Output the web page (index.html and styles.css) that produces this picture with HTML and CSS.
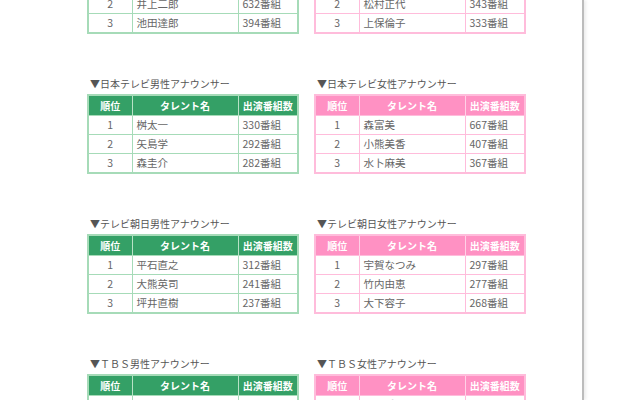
FILE: index.html
```html
<!DOCTYPE html>
<html lang="ja">
<head>
<meta charset="utf-8">
<link rel="stylesheet" href="styles.css">
</head>
<body>
<div class="page">
  <div class="sheet">
    <section class="pair">
      <div class="block male">
        <h3 class="title">▼ＴＢＳ男性アナウンサー</h3>
        <table>
          <colgroup><col class="c1"><col class="c2"><col class="c3"></colgroup>
          <tr><th>順位</th><th>タレント名</th><th>出演番組数</th></tr>
          <tr><td class="rank">1</td><td>安住紳一郎</td><td>700番組</td></tr>
          <tr><td class="rank">2</td><td>井上二郎</td><td>632番組</td></tr>
          <tr><td class="rank">3</td><td>池田達郎</td><td>394番組</td></tr>
        </table>
      </div>
      <div class="block female">
        <h3 class="title">▼ＴＢＳ女性アナウンサー</h3>
        <table>
          <colgroup><col class="c1"><col class="c2"><col class="c3"></colgroup>
          <tr><th>順位</th><th>タレント名</th><th>出演番組数</th></tr>
          <tr><td class="rank">1</td><td>江藤愛</td><td>400番組</td></tr>
          <tr><td class="rank">2</td><td>松村正代</td><td>343番組</td></tr>
          <tr><td class="rank">3</td><td>上保倫子</td><td>333番組</td></tr>
        </table>
      </div>
    </section>

    <section class="pair">
      <div class="block male">
        <h3 class="title">▼日本テレビ男性アナウンサー</h3>
        <table>
          <colgroup><col class="c1"><col class="c2"><col class="c3"></colgroup>
          <tr><th>順位</th><th>タレント名</th><th>出演番組数</th></tr>
          <tr><td class="rank">1</td><td>桝太一</td><td>330番組</td></tr>
          <tr><td class="rank">2</td><td>矢島学</td><td>292番組</td></tr>
          <tr><td class="rank">3</td><td>森圭介</td><td>282番組</td></tr>
        </table>
      </div>
      <div class="block female">
        <h3 class="title">▼日本テレビ女性アナウンサー</h3>
        <table>
          <colgroup><col class="c1"><col class="c2"><col class="c3"></colgroup>
          <tr><th>順位</th><th>タレント名</th><th>出演番組数</th></tr>
          <tr><td class="rank">1</td><td>森富美</td><td>667番組</td></tr>
          <tr><td class="rank">2</td><td>小熊美香</td><td>407番組</td></tr>
          <tr><td class="rank">3</td><td>水卜麻美</td><td>367番組</td></tr>
        </table>
      </div>
    </section>

    <section class="pair">
      <div class="block male">
        <h3 class="title">▼テレビ朝日男性アナウンサー</h3>
        <table>
          <colgroup><col class="c1"><col class="c2"><col class="c3"></colgroup>
          <tr><th>順位</th><th>タレント名</th><th>出演番組数</th></tr>
          <tr><td class="rank">1</td><td>平石直之</td><td>312番組</td></tr>
          <tr><td class="rank">2</td><td>大熊英司</td><td>241番組</td></tr>
          <tr><td class="rank">3</td><td>坪井直樹</td><td>237番組</td></tr>
        </table>
      </div>
      <div class="block female">
        <h3 class="title">▼テレビ朝日女性アナウンサー</h3>
        <table>
          <colgroup><col class="c1"><col class="c2"><col class="c3"></colgroup>
          <tr><th>順位</th><th>タレント名</th><th>出演番組数</th></tr>
          <tr><td class="rank">1</td><td>宇賀なつみ</td><td>297番組</td></tr>
          <tr><td class="rank">2</td><td>竹内由恵</td><td>277番組</td></tr>
          <tr><td class="rank">3</td><td>大下容子</td><td>268番組</td></tr>
        </table>
      </div>
    </section>

    <section class="pair">
      <div class="block male">
        <h3 class="title">▼ＴＢＳ男性アナウンサー</h3>
        <table>
          <colgroup><col class="c1"><col class="c2"><col class="c3"></colgroup>
          <tr><th>順位</th><th>タレント名</th><th>出演番組数</th></tr>
          <tr><td class="rank">1</td><td>安住紳一郎</td><td>700番組</td></tr>
          <tr><td class="rank">2</td><td>井上二郎</td><td>632番組</td></tr>
          <tr><td class="rank">3</td><td>池田達郎</td><td>394番組</td></tr>
        </table>
      </div>
      <div class="block female">
        <h3 class="title">▼ＴＢＳ女性アナウンサー</h3>
        <table>
          <colgroup><col class="c1"><col class="c2"><col class="c3"></colgroup>
          <tr><th>順位</th><th>タレント名</th><th>出演番組数</th></tr>
          <tr><td class="rank">1</td><td>江藤愛</td><td>400番組</td></tr>
          <tr><td class="rank">2</td><td>松村正代</td><td>343番組</td></tr>
          <tr><td class="rank">3</td><td>上保倫子</td><td>333番組</td></tr>
        </table>
      </div>
    </section>
  </div>
</div>
</body>
</html>
```

FILE: styles.css
```css
html, body {
  margin: 0;
  padding: 0;
  background: #fff;
  overflow: hidden;
}
body {
  font-family: "Noto Sans CJK JP", "Noto Sans", sans-serif;
  color: #555;
}
.page {
  width: 582px;
  height: 400px;
  border-right: 2px solid #bcbcbc;
  box-shadow: 2px 0 3px rgba(0, 0, 0, 0.08);
  overflow: hidden;
}
.sheet {
  padding-left: 87px;
  margin-top: -62px;
  display: flex;
  flex-direction: column;
}
.pair {
  display: flex;
  gap: 17px;
  height: 140px;
  flex: none;
}
.block {
  width: 210px;
}
.title {
  margin: 0 0 4px 3px;
  height: 12px;
  font-size: 10px;
  line-height: 12px;
  font-weight: normal;
  color: #555;
  white-space: nowrap;
}
table {
  width: 210px;
  table-layout: fixed;
  border-collapse: collapse;
  font-size: 10px;
}
col.c1 { width: 44px; }
col.c2 { width: 106px; }
col.c3 { width: 60px; }
th {
  height: 19px;
  padding: 0;
  color: #fff;
  font-weight: bold;
  text-align: center;
  line-height: 19px;
  white-space: nowrap;
}
td {
  height: 18px;
  padding: 0 0 0 4px;
  line-height: 18px;
  color: #666;
  font-size: 10.5px;
  white-space: nowrap;
  overflow: hidden;
}
td.rank {
  padding: 0;
  text-align: center;
}
.male table { border: 2px solid #a6dbb8; }
.male th { background: #34a066; border-left: 1px solid #b8e2c6; }
.male td { border: 1px solid #a6dbb8; }
.female table { border: 2px solid #ffbcdb; }
.female th { background: #ff91c3; border-left: 1px solid #ffd1e6; }
.female td { border: 1px solid #ffbcdb; }
.male td:first-child, .female td:first-child { border-left-width: 2px; }
th:first-child { border-left: none; }
```
